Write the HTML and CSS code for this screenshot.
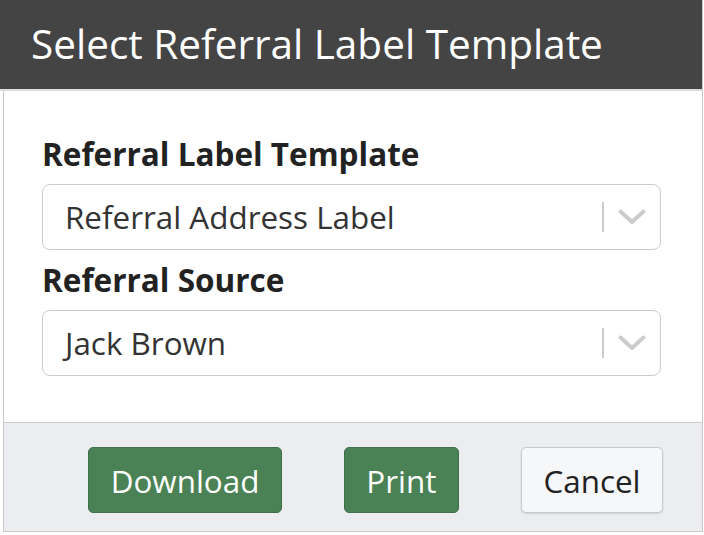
FILE: index.html
```html
<!DOCTYPE html>
<html>
<head>
<meta charset="utf-8">
<link rel="stylesheet" href="styles.css">
</head>
<body>
<div class="modal">
  <div class="modal-header">
    <h1 class="modal-title">Select Referral Label Template</h1>
  </div>
  <div class="modal-body">
    <label class="field-label">Referral Label Template</label>
    <div class="select">
      <span class="select-value">Referral Address Label</span>
      <span class="select-indicators">
        <span class="select-sep"></span>
        <svg class="chevron" width="28" height="16" viewBox="0 0 28 16"><path d="M2.5 2.5 L14 13 L25.5 2.5" fill="none" stroke="#cccccc" stroke-width="4" stroke-linecap="round" stroke-linejoin="round"/></svg>
      </span>
    </div>
    <label class="field-label">Referral Source</label>
    <div class="select">
      <span class="select-value">Jack Brown</span>
      <span class="select-indicators">
        <span class="select-sep"></span>
        <svg class="chevron" width="28" height="16" viewBox="0 0 28 16"><path d="M2.5 2.5 L14 13 L25.5 2.5" fill="none" stroke="#cccccc" stroke-width="4" stroke-linecap="round" stroke-linejoin="round"/></svg>
      </span>
    </div>
  </div>
  <div class="modal-footer">
    <button class="btn btn-primary">Download</button>
    <button class="btn btn-primary">Print</button>
    <button class="btn btn-default">Cancel</button>
  </div>
</div>
</body>
</html>
```
FILE: styles.css
```css
html, body {
  margin: 0;
  padding: 0;
  background: #ffffff;
}
body {
  font-family: "Open Sans", "Noto Sans", sans-serif;
}
.modal {
  margin-left: 3px;
  width: 698px;
  border-left: 1px solid #c9c9c9;
  border-right: 1px solid #c9c9c9;
  border-bottom: 1px solid #c9c9c9;
}
.modal-header {
  margin-left: -4px;
  height: 89px;
  background: #444444;
  border-bottom: 2px solid #dddddd;
  padding-left: 31px;
  box-sizing: content-box;
}
.modal-title {
  margin: 0;
  font-weight: 400;
  font-size: 40.5px;
  line-height: 88px;
  color: #ffffff;
  height: 89px;
}
.modal-body {
  padding: 45px 41px 46px 38px;
  display: flex;
  flex-direction: column;
}
.field-label {
  display: block;
  font-weight: 700;
  font-size: 31.5px;
  line-height: 36px;
  color: #222222;
  margin-bottom: 12px;
  padding-left: 0;
}
.select {
  height: 64px;
  border: 1px solid #cccccc;
  border-radius: 8px;
  display: flex;
  align-items: center;
  margin-bottom: 12px;
  background: #ffffff;
}
.select:last-child {
  margin-bottom: 0;
}
.select-value {
  flex: 1;
  padding-left: 22px;
  font-size: 31.4px;
  line-height: 64px;
  color: #333333;
}
.select-indicators {
  display: flex;
  align-items: center;
  padding-right: 14px;
}
.select-sep {
  width: 2px;
  height: 30px;
  background: #cccccc;
  margin-right: 14px;
}
.chevron {
  display: block;
}
.modal-footer {
  border-top: 1px solid #cccccc;
  background: #ebedf1;
  padding: 24px 39px 18px 0;
  display: flex;
  justify-content: flex-end;
  gap: 62px;
}
.btn {
  font-family: "Open Sans", "Noto Sans", sans-serif;
  font-size: 31.4px;
  height: 66px;
  padding: 0 21.5px;
  border-radius: 5px;
  cursor: pointer;
}
.btn-primary {
  background: #4a8155;
  border: 1px solid #3f7049;
  color: #ffffff;
}
.btn-default {
  background: #f6f7f9;
  border: 1px solid #c8c9cc;
  padding: 0 21.5px;
  color: #222222;
  box-shadow: 0 1px 2px rgba(0,0,0,0.12);
}
```
